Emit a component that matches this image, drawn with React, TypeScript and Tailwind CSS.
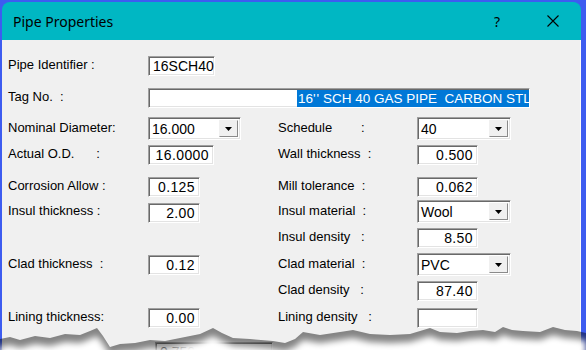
import React from 'react';

// sunken 3D edge used by edit boxes and combo boxes
const edge =
  'border border-t-[#a0a0a0] border-l-[#a0a0a0] border-b-white border-r-white shadow-[inset_1px_1px_0_#696969,inset_-1px_-1px_0_#e3e3e3]';

interface FieldProps {
  value?: string;
  className?: string;
  left?: boolean;
}

const Field: React.FC<FieldProps> = ({ value = '', className = '', left }) => (
  <div
    className={`h-[20px] bg-white ${edge} flex items-center px-[4px] leading-none whitespace-nowrap text-[14px] ${
      left ? 'justify-start' : 'justify-end tracking-[0.4px]'
    } ${className}`}
  >
    {value}
  </div>
);

const Combo: React.FC<{ value: string; className?: string }> = ({ value, className = '' }) => (
  <div className={`h-[23px] bg-white ${edge} flex p-[2px] text-[14px] ${className}`}>
    <span className="flex-1 flex items-center pl-[1px] leading-none">{value}</span>
    <span className="w-[19px] flex items-center justify-center bg-[#f0f0f0] border border-t-[#f0f0f0] border-l-[#f0f0f0] border-b-[#8a8a8a] border-r-[#8a8a8a]">
      <svg width="7" height="4" viewBox="0 0 7 4">
        <path d="M0 0H7L3.5 4Z" fill="#000" />
      </svg>
    </span>
  </div>
);

const Label: React.FC<{ text: string }> = ({ text }) => (
  <div className="whitespace-pre leading-none pb-[3px]">{text}</div>
);

interface RowProps {
  className: string;
  children: React.ReactNode;
}

const Row: React.FC<RowProps> = ({ className, children }) => (
  <div className={`grid grid-cols-[140px_130px_139px_1fr] ${className}`}>{children}</div>
);

// jagged bottom of the torn screenshot
const tear =
  'M0 339 L10 337 L20 340 L35 336 L50 338 L65 334 L80 335 L90 331 L97 328 L103 336 L110 347 L120 344 L135 343 L150 340 L165 341 L185 337 L200 334 L213 328 L222 333 L233 338 L250 339 L273 341 L285 343 L295 339 L303 332 L320 335 L340 332 L353 330 L370 334 L390 335 L410 334 L420 331 L430 328 L440 332 L457 333 L470 331 L483 330 L495 332 L503 327 L512 330 L523 331 L540 332 L553 327 L565 330 L577 331 L586 333 L586 356 L0 356 Z';

export default function App() {
  return (
    <div className="relative w-[586px] h-[356px] overflow-hidden bg-[#3d5cf0] pt-[2px] pl-[2px] pr-[5px] font-['Liberation_Sans',Arial,sans-serif] text-[13px] text-black">
      <div className="flex flex-col h-full">
        {/* Title bar */}
        <div className="h-[38px] shrink-0 flex items-center bg-[#00b7c3] rounded-t-[8px] pl-[11px] font-['Noto_Sans',sans-serif] text-[14px]">
          <span>Pipe Properties</span>
          <span className="ml-auto">?</span>
          <svg className="ml-[47px] mr-[22px]" width="12" height="12" viewBox="0 0 12 12">
            <path d="M0.5 0.5L11.5 11.5M11.5 0.5L0.5 11.5" stroke="#000" strokeWidth="1.1" />
          </svg>
        </div>

        {/* Dialog body */}
        <div className="flex-1 bg-[#f0f0f0] border-r border-[#fafafa] pl-[6px]">
          <Row className="mt-[16px] h-[20px] items-center">
            <Label text="Pipe Identifier :" />
            <Field value="16SCH40" left className="w-[67px]" />
          </Row>

          <Row className="mt-[12px] h-[20px] items-center">
            <Label text="Tag No.  :" />
            <div className={`col-span-3 w-[382px] h-[20px] bg-white ${edge} overflow-hidden flex items-center`}>
              <span className="ml-[148px] h-[17px] px-[1px] bg-[#0078d7] text-white text-[13.5px] whitespace-pre leading-[17px]">
                16'<span className="ml-[1px]">'</span> SCH 40 GAS PIPE  CARBON STL
              </span>
            </div>
          </Row>

          <Row className="mt-[9px] h-[23px] items-center">
            <Label text="Nominal Diameter:" />
            <Combo value="16.000" className="w-[93px]" />
            <Label text="Schedule        :" />
            <Combo value="40" className="w-[94px]" />
          </Row>

          <Row className="mt-[5px] h-[20px] items-center">
            <Label text="Actual O.D.      :" />
            <Field value="16.0000" className="w-[66px]" />
            <Label text="Wall thickness  :" />
            <Field value="0.500" className="w-[61px]" />
          </Row>

          <Row className="mt-[12px] h-[20px] items-center">
            <Label text="Corrosion Allow :" />
            <Field value="0.125" className="w-[52px]" />
            <Label text="Mill tolerance  :" />
            <Field value="0.062" className="w-[61px]" />
          </Row>

          <Row className="mt-[3px] h-[23px] items-end">
            <div className="self-center">
              <Label text="Insul thickness :" />
            </div>
            <Field value="2.00" className="w-[52px]" />
            <div className="self-center">
              <Label text="Insul material  :" />
            </div>
            <Combo value="Wool" className="w-[94px]" />
          </Row>

          <Row className="mt-[5px] h-[20px] items-center">
            <div />
            <div />
            <Label text="Insul density   :" />
            <Field value="8.50" className="w-[61px]" />
          </Row>

          <Row className="mt-[5px] h-[23px] items-center">
            <Label text="Clad thickness  :" />
            <Field value="0.12" className="w-[52px]" />
            <Label text="Clad material  :" />
            <Combo value="PVC" className="w-[94px]" />
          </Row>

          <Row className="mt-[5px] h-[20px] items-center">
            <div />
            <div />
            <Label text="Clad density   :" />
            <Field value="87.40" className="w-[61px]" />
          </Row>

          <Row className="mt-[7px] h-[20px] items-center">
            <Label text="Lining thickness:" />
            <Field value="0.00" className="w-[52px]" />
            <Label text="Lining density   :" />
            <Field className="w-[61px]" />
          </Row>

          {/* next row, mostly lost under the tear */}
          <Row className="mt-[14px] h-[20px] items-center">
            <div />
            <Field value="0.750" left className="ml-[7px] w-[118px]" />
          </Row>
        </div>
      </div>

      {/* torn edge with its shadow, laid over the bottom of the dialog */}
      <svg className="absolute left-0 top-[318px]" width="586" height="38" viewBox="0 318 586 38">
        <defs>
          <filter id="soft" x="-5%" y="-50%" width="110%" height="200%">
            <feGaussianBlur stdDeviation="3" />
          </filter>
          <filter id="edgeSoft" x="-5%" y="-50%" width="110%" height="200%">
            <feGaussianBlur stdDeviation="0.6" />
          </filter>
        </defs>
        <path d={tear} fill="#000000" fillOpacity="0.45" filter="url(#edgeSoft)" />
        <path d={tear} fill="#ffffff" transform="translate(0 8)" filter="url(#soft)" />
        <rect x="0" y="350" width="586" height="6" fill="#ffffff" />
      </svg>
    </div>
  );
}
